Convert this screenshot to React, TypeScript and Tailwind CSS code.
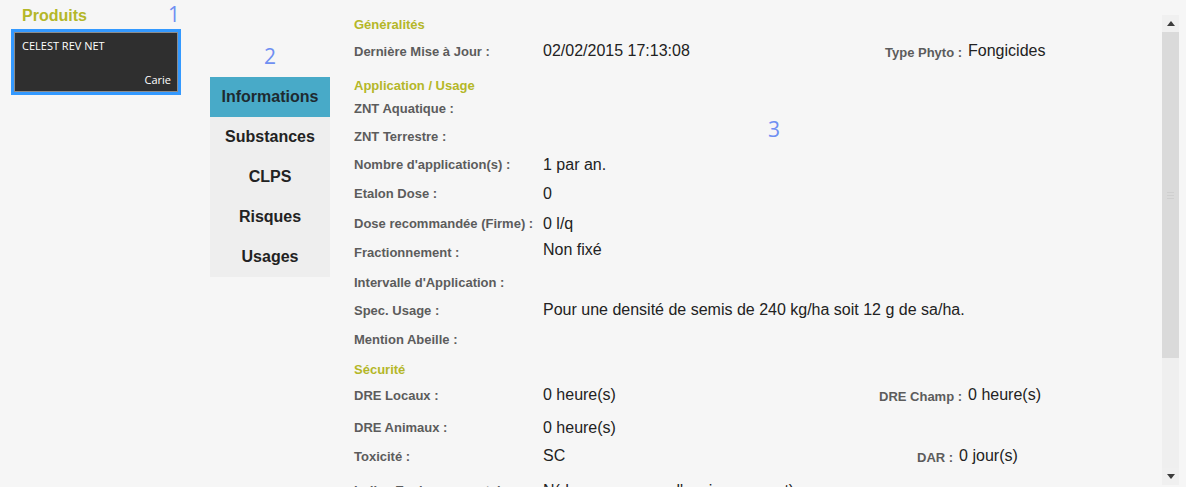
import React from 'react';

type Row = {
  kind: 'head' | 'row';
  label: string;
  value?: string;
  mt: string;
  vcls?: string;
  right?: { label: string; value: string; ml: string };
};

const rows: Row[] = [
  { kind: 'head', label: 'Généralités', mt: 'mt-[15px]' },
  { kind: 'row', label: 'Dernière Mise à Jour :', value: '02/02/2015 17:13:08', mt: 'mt-[7px]', vcls: 'mb-[3px]', right: { label: 'Type Phyto :', value: 'Fongicides', ml: 'ml-[6px]' } },
  { kind: 'head', label: 'Application / Usage', mt: 'mt-[14px]' },
  { kind: 'row', label: 'ZNT Aquatique :', mt: 'mt-[3px]' },
  { kind: 'row', label: 'ZNT Terrestre :', mt: 'mt-[8px]' },
  { kind: 'row', label: "Nombre d'application(s) :", value: '1 par an.', mt: 'mt-[8px]' },
  { kind: 'row', label: 'Etalon Dose :', value: '0', mt: 'mt-[9px]' },
  { kind: 'row', label: 'Dose recommandée (Firme) :', value: '0 l/q', mt: 'mt-[10px]' },
  { kind: 'row', label: 'Fractionnement :', value: 'Non fixé', mt: 'mt-[9px]', vcls: 'mb-[7px]' },
  { kind: 'row', label: "Intervalle d'Application :", mt: 'mt-[10px]' },
  { kind: 'row', label: 'Spec. Usage :', value: 'Pour une densité de semis de 240 kg/ha soit 12 g de sa/ha.', mt: 'mt-[8px]', vcls: 'mb-[2px]' },
  { kind: 'row', label: 'Mention Abeille :', mt: 'mt-[9px]' },
  { kind: 'head', label: 'Sécurité', mt: 'mt-[10px]' },
  { kind: 'row', label: 'DRE Locaux :', value: '0 heure(s)', mt: 'mt-[6px]', vcls: 'mb-[3px]', right: { label: 'DRE Champ :', value: '0 heure(s)', ml: 'ml-[0px]' } },
  { kind: 'row', label: 'DRE Animaux :', value: '0 heure(s)', mt: 'mt-[12px]' },
  { kind: 'row', label: 'Toxicité :', value: 'SC', mt: 'mt-[9px]', vcls: 'mb-[3px]', right: { label: 'DAR :', value: '0 jour(s)', ml: 'ml-[38px]' } },
  { kind: 'row', label: 'Indice Environnemental :', value: "N(dangereux pour l'environnement)", mt: 'mt-[14px]' },
];

const menu = ['Informations', 'Substances', 'CLPS', 'Risques', 'Usages'];

function Arrow({ up }: { up: boolean }) {
  return (
    <div className="h-[17px] bg-[#f0f0f0] flex items-center justify-center">
      <svg width="8" height="5" viewBox="0 0 8 5">
        {up ? <polygon points="4,0 8,5 0,5" fill="#3c3c3c" /> : <polygon points="0,0 8,0 4,5" fill="#3c3c3c" />}
      </svg>
    </div>
  );
}

export default function App() {
  return (
    <div className="w-[1186px] h-[487px] overflow-hidden bg-[#f6f6f6] flex font-['Liberation_Sans',Arial,sans-serif]">
      {/* produits */}
      <div className="w-[210px] shrink-0 pl-[11px]">
        <div className="w-[170px] flex justify-between items-start">
          <span className="mt-[6px] pl-[11px] text-[16px] font-bold text-[#b4b728] leading-[20px]">Produits</span>
          <span className="mt-[1px] pr-[1px] font-['Open_Sans',sans-serif] text-[21px] leading-[26px] text-[#6f8ff2]">1</span>
        </div>
        <div className="mt-[2px] w-[170px] h-[66px] border-[3px] border-[#3399ff]">
          <div className="h-full border border-[#8c8c8c] bg-[#2f2f2f] flex flex-col justify-between pl-[7px] pr-[6px] pt-[5px] pb-[4px] font-['Open_Sans',sans-serif] text-[11px] leading-[15px] text-white">
            <span>CELEST REV NET</span>
            <span className="self-end">Carie</span>
          </div>
        </div>
      </div>

      {/* menu */}
      <div className="w-[120px] shrink-0">
        <div className="mt-[43px] h-[26px] leading-[26px] text-center font-['Open_Sans',sans-serif] text-[21px] text-[#6f8ff2]">2</div>
        <div className="mt-[8px] bg-[#eeeeee]">
          {menu.map((m, i) => (
            <div
              key={m}
              className={`h-[40px] leading-[40px] text-center text-[16px] font-bold ${i === 0 ? 'bg-[#48aac8] text-[#1e2a30]' : 'text-[#222222]'}`}
            >
              {m}
            </div>
          ))}
        </div>
      </div>

      {/* contenu */}
      <div className="flex-1 pl-[24px] relative">
        <span className="absolute left-[438px] top-[116px] font-['Open_Sans',sans-serif] text-[21px] leading-[26px] text-[#6f8ff2]">3</span>
        {rows.map((r) =>
          r.kind === 'head' ? (
            <div key={r.label} className={`${r.mt} h-[20px] flex items-center text-[13px] font-bold text-[#b4b728]`}>
              {r.label}
            </div>
          ) : (
            <div key={r.label} className={`${r.mt} h-[20px] flex items-center whitespace-nowrap`}>
              <div className="w-[525px] shrink-0 flex items-center">
                <span className="w-[189px] shrink-0 text-[13px] font-bold text-[#5c5c5c]">{r.label}</span>
                {r.value && <span className={`text-[16px] text-[#222222] ${r.vcls ?? ''}`}>{r.value}</span>}
              </div>
              {r.right && (
                <div className={`${r.right.ml} flex items-center gap-[6px]`}>
                  <span className="text-[13px] font-bold text-[#5c5c5c] mt-[1px]">{r.right.label}</span>
                  <span className="text-[16px] text-[#222222] mb-[3px]">{r.right.value}</span>
                </div>
              )}
            </div>
          )
        )}
      </div>

      {/* barre de défilement */}
      <div className="w-[17px] shrink-0 pt-[15px] mr-[7px]">
        <Arrow up />
        <div className="h-[326px] bg-[#dadada] flex flex-col items-center justify-center gap-[2px]">
          <div className="w-[7px] h-px bg-[#cfcfcf]" />
          <div className="w-[7px] h-px bg-[#cfcfcf]" />
          <div className="w-[7px] h-px bg-[#cfcfcf]" />
        </div>
        <div className="h-[110px] bg-[#efefef]" />
        <Arrow up={false} />
      </div>
    </div>
  );
}
